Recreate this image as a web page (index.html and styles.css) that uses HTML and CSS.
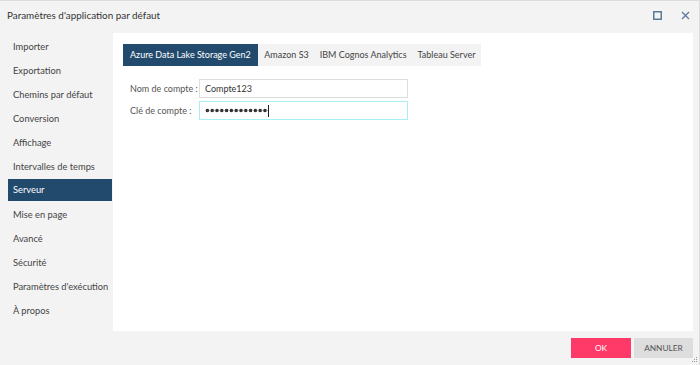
FILE: index.html
```html
<!DOCTYPE html>
<html lang="fr">
<head>
    <meta charset="UTF-8">
    <meta name="viewport" content="width=device-width, initial-scale=1.0">
    <title>Paramètres d'application par défaut</title>
    <link rel="stylesheet" href="styles.css">
</head>
<body>
  <div class="dialog">
    <div class="titlebar">
        <span class="title">Paramètres d'application par défaut</span>
        <div class="window-btns">
            <svg class="win-icon" width="9" height="9" viewBox="0 0 9 9"><rect x="0.75" y="0.75" width="7.5" height="7.5" fill="none" stroke="#5b7a99" stroke-width="1.5"/></svg>
            <svg class="win-icon" width="9" height="9" viewBox="0 0 9 9"><path d="M1 1L8 8M8 1L1 8" stroke="#5b7a99" stroke-width="1.3"/></svg>
        </div>
    </div>
    <div class="body">
        <ul class="sidebar">
            <li>Importer</li>
            <li>Exportation</li>
            <li>Chemins par défaut</li>
            <li>Conversion</li>
            <li>Affichage</li>
            <li>Intervalles de temps</li>
            <li class="active">Serveur</li>
            <li>Mise en page</li>
            <li>Avancé</li>
            <li>Sécurité</li>
            <li>Paramètres d'exécution</li>
            <li>À propos</li>
        </ul>
        <div class="content">
            <div class="tabs">
                <span class="tab active">Azure Data Lake Storage Gen2</span>
                <span class="tab">Amazon S3</span>
                <span class="tab">IBM Cognos Analytics</span>
                <span class="tab">Tableau Server</span>
            </div>
            <div class="form">
                <div class="form-row">
                    <label>Nom de compte :</label>
                    <div class="field">Compte123</div>
                </div>
                <div class="form-row">
                    <label>Clé de compte :</label>
                    <div class="field focused"><span class="dots"></span><span class="caret"></span></div>
                </div>
            </div>
        </div>
    </div>
    <div class="footer">
        <button class="btn btn-ok">OK</button>
        <button class="btn btn-cancel">ANNULER</button>
        <svg class="grip" width="6" height="6" viewBox="0 0 6 6">
            <rect x="4" y="0" width="1" height="1" fill="#8a9bb0"/>
            <rect x="2" y="2" width="1" height="1" fill="#8a9bb0"/>
            <rect x="4" y="2" width="1" height="1" fill="#8a9bb0"/>
            <rect x="0" y="4" width="1" height="1" fill="#8a9bb0"/>
            <rect x="2" y="4" width="1" height="1" fill="#8a9bb0"/>
            <rect x="4" y="4" width="1" height="1" fill="#8a9bb0"/>
        </svg>
    </div>
  </div>
</body>
</html>
```

FILE: styles.css
```css
body {
    margin: 0;
    font-family: Lato, "Open Sans", sans-serif;
    font-size: 9px;
    color: #444;
}

.dialog {
    width: 700px;
    height: 365px;
    box-sizing: border-box;
    background: #f3f3f3;
    border-top: 1px solid #dcdcdc;
    border-right: 1px solid #dcdcdc;
    display: flex;
    flex-direction: column;
}

.titlebar {
    height: 32px;
    display: flex;
    align-items: center;
    justify-content: space-between;
    padding: 0 9px 0 7px;
}

.title {
    font-size: 9.9px;
    color: #333;
    margin-top: -4px;
}

.window-btns {
    display: flex;
    gap: 19px;
    margin-top: -4px;
}

.win-icon {
    display: block;
}

.body {
    flex: 1;
    display: flex;
    padding-right: 6px;
}

.sidebar {
    list-style: none;
    margin: 0;
    padding: 2px 1px 0 8px;
    width: 104px;
    font-size: 9.3px;
}

.sidebar li {
    height: 24px;
    line-height: 24px;
    padding-left: 5px;
    white-space: nowrap;
    color: #444;
}

.sidebar li.active {
    background: #224a6d;
    color: #ffffff;
    height: 22px;
    line-height: 22px;
    margin: 0 0 2px;
}

.content {
    flex: 1;
    background: #ffffff;
    padding: 11px 10px;
}

.tabs {
    display: flex;
    background: #f3f3f3;
    width: max-content;
}

.tab {
    height: 22px;
    line-height: 22px;
    padding: 0 5.5px;
    color: #444;
    white-space: nowrap;
}

.tab.active {
    background: #224a6d;
    color: #ffffff;
    padding: 0 7px;
    margin-right: 1px;
}

.form {
    padding: 13px 0 0 7px;
    display: flex;
    flex-direction: column;
    gap: 3px;
}

.form-row {
    display: flex;
    align-items: center;
}

.form-row label {
    width: 69px;
    color: #555;
    white-space: nowrap;
}

.field {
    width: 199px;
    height: 17px;
    line-height: 17px;
    border: 1px solid #dedede;
    padding: 0 3px 0 5px;
    color: #333;
    display: flex;
    align-items: center;
}

.field.focused {
    border-color: #a8eef6;
}

.dots {
    width: 63px;
    height: 5px;
    background: radial-gradient(circle, #333 1.6px, transparent 2.1px) 0 0 / 4.8px 5px repeat-x;
}

.caret {
    width: 1px;
    height: 12px;
    background: #222;
}

.footer {
    height: 34px;
    display: flex;
    align-items: center;
    justify-content: flex-end;
    gap: 3px;
    padding-right: 6px;
    position: relative;
}

.btn {
    height: 20px;
    border: none;
    font-family: Lato, "Open Sans", sans-serif;
    font-size: 8.3px;
    padding: 0;
}

.btn-ok {
    width: 60px;
    background: #ff3a68;
    color: #ffffff;
}

.btn-cancel {
    width: 59px;
    background: #dddddd;
    color: #555;
}

.grip {
    position: absolute;
    right: 1px;
    bottom: 2px;
}
```
